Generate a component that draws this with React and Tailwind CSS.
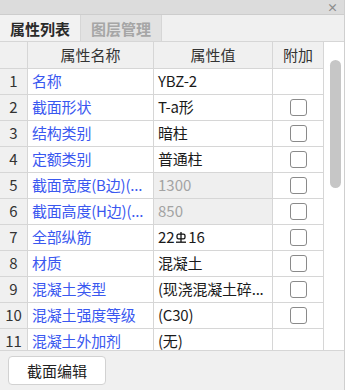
import React from "react";

const rows = [
  { name: "名称", value: "YBZ-2", check: false },
  { name: "截面形状", value: "T-a形", check: true },
  { name: "结构类别", value: "暗柱", check: true },
  { name: "定额类别", value: "普通柱", check: true },
  { name: "截面宽度(B边)(...", value: "1300", check: true, disabled: true },
  { name: "截面高度(H边)(...", value: "850", check: true, disabled: true },
  { name: "全部纵筋", value: "rebar", check: true },
  { name: "材质", value: "混凝土", check: true },
  { name: "混凝土类型", value: "(现浇混凝土碎...", check: true },
  { name: "混凝土强度等级", value: "(C30)", check: true },
  { name: "混凝土外加剂", value: "(无)", check: false },
];

function RebarSymbol() {
  return (
    <svg width="12" height="13" viewBox="0 0 12 13" className="inline-block mx-[1px] -mt-[3px]">
      <path d="M6 1V11" stroke="#111" strokeWidth="1.3" />
      <rect x="2" y="3.2" width="8" height="4.6" rx="1.6" fill="none" stroke="#111" strokeWidth="1.3" />
      <path d="M1 11.2H11" stroke="#111" strokeWidth="1.3" />
    </svg>
  );
}

function Checkbox() {
  return <div className="w-[17px] h-[17px] rounded-[3px] border-[1.5px] border-[#8a8a8a] bg-white" />;
}

export default function App() {
  return (
    <div
      className="w-[345px] h-[390px] flex flex-col bg-[#f0f0f0] text-[15px] text-[#222] overflow-hidden border-r border-[#cfcfcf]"
      style={{ fontFamily: '"Noto Sans CJK SC", "Noto Sans", sans-serif' }}
    >
      {/* title strip */}
      <div className="h-[15px] shrink-0 bg-[#dcdcdc] border-b border-[#cdcdcd] flex items-center justify-end pr-[6px]">
        <span className="text-[11px] leading-none font-bold text-[#8c8c8c]">×</span>
      </div>

      {/* tabs */}
      <div className="h-[27px] shrink-0 flex border-b border-[#d6d6d6] bg-[#f0f0f0]">
        <div className="w-[81px] flex items-center justify-center font-bold text-[#2a2a2a] border-r border-[#d6d6d6] bg-[#f2f2f2] leading-none">
          属性列表
        </div>
        <div className="w-[81px] flex items-center justify-center font-bold text-[#a6a6a6] border-r border-[#d6d6d6] bg-[#e2e2e2] leading-none">
          图层管理
        </div>
      </div>

      {/* table */}
      <div className="flex-1 flex min-h-0 overflow-hidden bg-white border-b border-[#d6d6d6]">
        <div className="w-[324px] shrink-0">
          <div className="grid grid-cols-[28px_126px_119px_51px] h-[27px] bg-[#f0f0f0] text-[#333]">
            <div className="border-r border-b border-[#d6d6d6]" />
            <div className="border-r border-b border-[#d6d6d6] flex items-center justify-center">属性名称</div>
            <div className="border-r border-b border-[#d6d6d6] flex items-center justify-center">属性值</div>
            <div className="border-r border-b border-[#d6d6d6] flex items-center justify-center">附加</div>
          </div>
          {rows.map((r, i) => (
            <div key={i} className="grid grid-cols-[28px_126px_119px_51px] h-[26px]">
              <div className="bg-[#f0f0f0] border-r border-b border-[#d6d6d6] flex items-center justify-center text-[#333]">
                {i + 1}
              </div>
              <div className="border-r border-b border-[#d6d6d6] flex items-center pl-[4px] text-[#3a58f0] min-w-0 whitespace-nowrap tracking-[-0.2px]">
                {r.name}
              </div>
              <div
                className={
                  r.disabled
                    ? "border-r border-b border-[#d6d6d6] flex items-center pl-[4px] min-w-0 whitespace-nowrap bg-[#efefef] text-[#a3a3a3]"
                    : "border-r border-b border-[#d6d6d6] flex items-center pl-[4px] min-w-0 whitespace-nowrap text-[#1a1a1a] tracking-[-0.2px]"
                }
              >
                {r.value === "rebar" ? (
                  <span>
                    22<RebarSymbol />16
                  </span>
                ) : (
                  r.value
                )}
              </div>
              <div className="border-r border-b border-[#d6d6d6] flex items-center justify-center">
                {r.check && <Checkbox />}
              </div>
            </div>
          ))}
        </div>
        {/* scrollbar */}
        <div className="flex-1 bg-white pt-[18px] flex justify-center">
          <div className="w-[11px] h-[128px] rounded-full bg-[#c6c6c6] ml-[2px]" />
        </div>
      </div>

      {/* bottom */}
      <div className="h-[39px] shrink-0 flex items-center pl-[8px]">
        <button className="w-[98px] h-[29px] bg-white border border-[#d2d2d2] rounded-[4px] text-[#222] flex items-center justify-center leading-none">
          截面编辑
        </button>
      </div>
    </div>
  );
}
